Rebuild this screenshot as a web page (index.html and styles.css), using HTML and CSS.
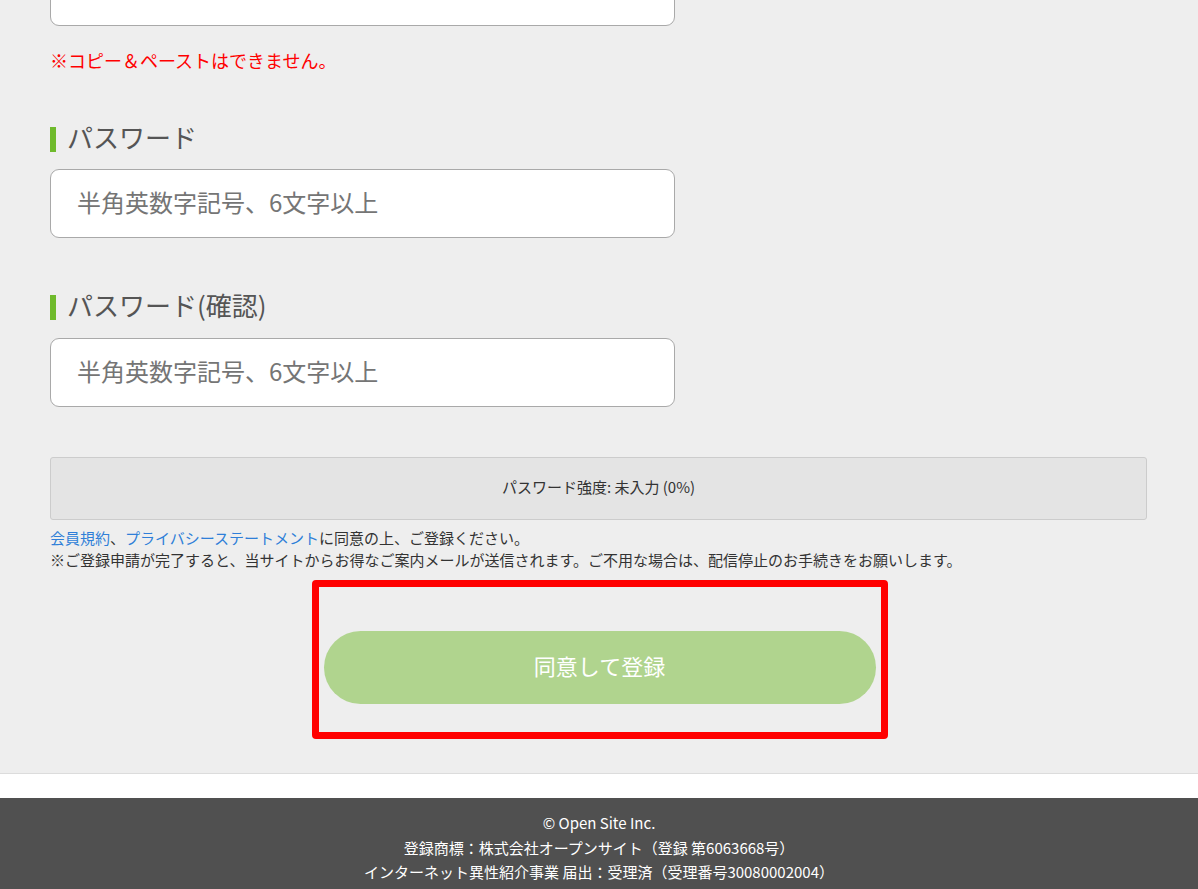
FILE: index.html
```html
<!DOCTYPE html>
<html lang="ja">
<head>
<meta charset="utf-8">
<title>会員登録</title>
<link rel="stylesheet" href="styles.css">
</head>
<body>
<main class="form">
  <input class="text-input text-input--cut" type="text" aria-label="メールアドレス(確認)">
  <p class="note">※コピー＆ペーストはできません。</p>

  <h3 class="field-label">パスワード</h3>
  <input class="text-input" type="password" placeholder="半角英数字記号、6文字以上">

  <h3 class="field-label field-label--next">パスワード(確認)</h3>
  <input class="text-input text-input--next" type="password" placeholder="半角英数字記号、6文字以上">

  <div class="strength">パスワード強度: 未入力 (0%)</div>

  <p class="agree">
    <a href="#">会員規約</a>、<a href="#">プライバシーステートメント</a>に同意の上、ご登録ください。<br>
    ※ご登録申請が完了すると、当サイトからお得なご案内メールが送信されます。ご不用な場合は、配信停止のお手続きをお願いします。
  </p>

  <div class="highlight">
    <button class="submit" type="submit">同意して登録</button>
  </div>
</main>
<div class="spacer"></div>
<footer class="footer">
  <p>© Open Site Inc.</p>
  <p>登録商標：株式会社オープンサイト（登録 第6063668号）</p>
  <p>インターネット異性紹介事業 届出：受理済（受理番号30080002004）</p>
</footer>
</body>
</html>
```

FILE: styles.css
```css
* {
  box-sizing: border-box;
}

html, body {
  margin: 0;
  padding: 0;
}

body {
  font-family: "Noto Sans CJK JP", "Noto Sans", sans-serif;
  background: #ffffff;
  color: #333;
  overflow: hidden;
}

.form {
  background: #eeeeee;
  padding: 0 51px 34px 50px;
  border-bottom: 1px solid #dcdcdc;
  overflow: hidden;
}

.text-input {
  display: block;
  width: 625px;
  height: 69px;
  margin: 17px 0 0;
  padding: 0 26px 5px;
  border: 1px solid #a9a9a9;
  border-radius: 9px;
  background: #fff;
  font-family: inherit;
  font-size: 24px;
  color: #333;
  outline: none;
}

.text-input::placeholder {
  color: #757575;
}

.text-input--cut {
  margin-top: -43px;
}

.text-input--next {
  margin-top: 18px;
}

.note {
  margin: 22px 0 0;
  font-size: 18px;
  line-height: 24px;
  color: #ff0000;
}

.field-label {
  display: flex;
  align-items: flex-start;
  margin: 51px 0 0;
  font-size: 26px;
  font-weight: normal;
  line-height: 28px;
  color: #555;
}

.field-label::before {
  content: "";
  flex: none;
  width: 6px;
  height: 25px;
  margin: 4px 11px 0 0;
  background: #6fba2c;
}

.field-label--next {
  margin-top: 53px;
}

.strength {
  margin-top: 50px;
  height: 63px;
  padding-bottom: 4px;
  border: 1px solid #cccccc;
  border-radius: 3px;
  background: #e4e4e4;
  font-size: 15px;
  line-height: 57px;
  text-align: center;
  color: #333;
}

.agree {
  margin: 7px 0 0;
  font-size: 15px;
  line-height: 22px;
  color: #333;
}

.agree a {
  color: #2f7fd8;
  text-decoration: none;
}

.highlight {
  width: 576px;
  margin: 9px auto 0;
  padding: 44px 0 28px;
  border: 7px solid #ff0000;
  border-radius: 4px;
  position: relative;
  left: 1px;
}

.submit {
  display: block;
  width: 552px;
  height: 73px;
  margin: 0 auto;
  padding: 0 0 5px;
  border: none;
  border-radius: 37px;
  background: #b0d48e;
  color: #ffffff;
  font-family: inherit;
  font-size: 22px;
  cursor: pointer;
}

.spacer {
  height: 24px;
  background: #fff;
}

.footer {
  background: #505050;
  color: #ffffff;
  text-align: center;
  padding: 13px 0 19px;
  font-size: 15px;
  line-height: 24.5px;
}

.footer p {
  margin: 0;
}
```
